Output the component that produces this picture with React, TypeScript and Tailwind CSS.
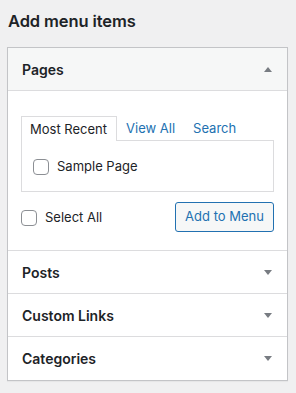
import React from "react";

const font = { fontFamily: "Inter, 'Noto Sans', sans-serif" };

function Arrow({ up }: { up?: boolean }) {
  return (
    <svg width="8" height="5" viewBox="0 0 8 5" className="shrink-0">
      {up ? <path d="M4 0 L8 5 L0 5 Z" fill="#787c82" /> : <path d="M0 0 L8 0 L4 5 Z" fill="#787c82" />}
    </svg>
  );
}

function Checkbox() {
  return <span className="block w-4 h-4 rounded-[4px] border border-[#8c8f94] bg-white shrink-0" />;
}

function Row({ title, last }: { title: string; last?: boolean }) {
  return (
    <div className={`h-[43px] flex items-center justify-between pl-[14px] pr-[15px] ${last ? "" : "border-b border-[#dcdcde]"}`}>
      <span className="text-[14px] font-semibold text-[#1d2327]">{title}</span>
      <Arrow />
    </div>
  );
}

export default function App() {
  return (
    <div className="w-[296px] h-[393px] bg-[#f0f0f1] text-[#1d2327]" style={font}>
      <div className="pl-[8px] pt-[9px] h-[47px]">
        <h2 className="text-[16.5px] font-semibold leading-[24px] tracking-[-0.1px]">Add menu items</h2>
      </div>
      <div className="ml-[7px] w-[281px] border border-[#c3c4c7] bg-white shadow-[0_1px_1px_rgba(0,0,0,0.04)]">
        <div className="h-[43px] bg-[#f6f7f7] border-b border-[#dcdcde] flex items-center justify-between pl-[14px] pr-[15px]">
          <span className="text-[14px] font-semibold">Pages</span>
          <Arrow up />
        </div>
        <div className="px-[13px] pt-[25px] pb-[18px] border-b border-[#dcdcde]">
          <div className="flex items-end text-[13px] leading-[18px] relative z-10">
            <div className="h-[25px] pl-[8px] pr-[9px] flex items-center border border-b-0 border-[#dcdcde] bg-white -mb-px">Most Recent</div>
            <div className="h-[24px] pl-[9px] pr-[9px] flex items-center text-[#2271b1]">View All</div>
            <div className="h-[24px] px-[9px] flex items-center text-[#2271b1]">Search</div>
          </div>
          <div className="h-[52px] border border-[#dcdcde] pl-[11px] pt-px flex items-center gap-2">
            <Checkbox />
            <span className="text-[13px]">Sample Page</span>
          </div>
          <div className="mt-[10px] flex items-center justify-between">
            <label className="flex items-center gap-2 text-[13px] pt-px">
              <Checkbox />
              <span>Select All</span>
            </label>
            <button className="h-[30px] w-[99px] rounded-[3px] border border-[#2271b1] bg-[#f6f7f7] text-[#2271b1] text-[13px]">Add to Menu</button>
          </div>
        </div>
        <Row title="Posts" />
        <Row title="Custom Links" />
        <Row title="Categories" last />
      </div>
    </div>
  );
}
